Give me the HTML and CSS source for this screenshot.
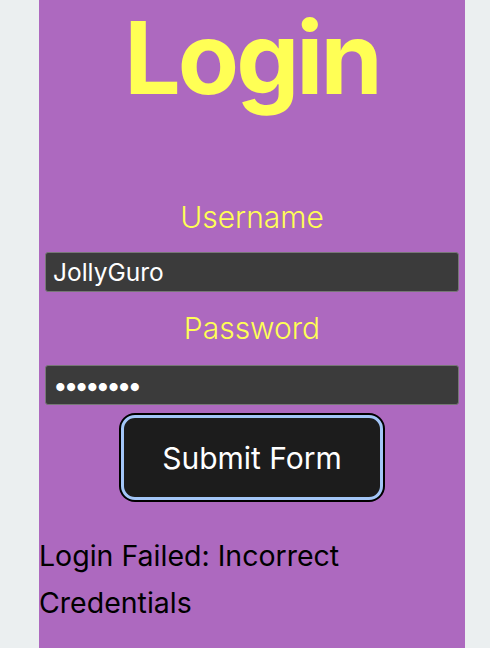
FILE: index.html
```html
<!DOCTYPE html>
<html>
<head>
<meta charset="utf-8">
<link rel="stylesheet" href="styles.css">
</head>
<body>
<main class="panel">
  <h1 class="title">Login</h1>
  <form class="form">
    <label class="label" for="u">Username</label>
    <input class="field" id="u" type="text" value="JollyGuro">
    <label class="label label-next" for="p">Password</label>
    <input class="field field-pass" id="p" type="password" value="password">
    <button class="submit" type="button">Submit Form</button>
  </form>
  <p class="error">Login Failed: Incorrect Credentials</p>
</main>
</body>
</html>
```
FILE: styles.css
```css
html, body {
  margin: 0;
  padding: 0;
  background: #ebeff0;
  height: 100%;
  overflow: hidden;
}
body {
  font-family: Inter, "Noto Sans", sans-serif;
}
.panel {
  width: 426px;
  margin-left: 39px;
  min-height: 100%;
  background: #ad69bf;
  display: flex;
  flex-direction: column;
}
.title {
  margin: 0;
  font-size: 100px;
  line-height: 116px;
  font-weight: 700;
  color: #ffff55;
  text-align: center;
  letter-spacing: -3px;
}
.form {
  display: flex;
  flex-direction: column;
  align-items: center;
  padding: 0 6px;
  margin-top: 83px;
}
.label {
  font-size: 30px;
  line-height: 36px;
  font-weight: 300;
  color: #ffff55;
}
.label-next {
  margin-top: 18px;
}
.field {
  box-sizing: border-box;
  width: 100%;
  height: 40px;
  margin-top: 17px;
  padding: 0 7px;
  background: #3b3b3b;
  border: 1.5px solid #777;
  border-radius: 3px;
  color: #fff;
  font-family: Inter, sans-serif;
  font-size: 24.5px;
  outline: none;
}
.field-pass {
  margin-top: 19px;
  font-size: 26px;
  letter-spacing: -4px;
}
.submit {
  box-sizing: border-box;
  width: 262px;
  height: 85px;
  margin-top: 10px;
  background: #1c1c1c;
  border: 3px solid #a3c6f7;
  box-shadow: 0 0 0 2px #000;
  border-radius: 14px;
  color: #fff;
  font-family: Inter, sans-serif;
  font-size: 30px;
  font-weight: 400;
}
.error {
  margin: 32px 0 0;
  font-size: 28.5px;
  line-height: 47px;
  color: #000;
}
```
